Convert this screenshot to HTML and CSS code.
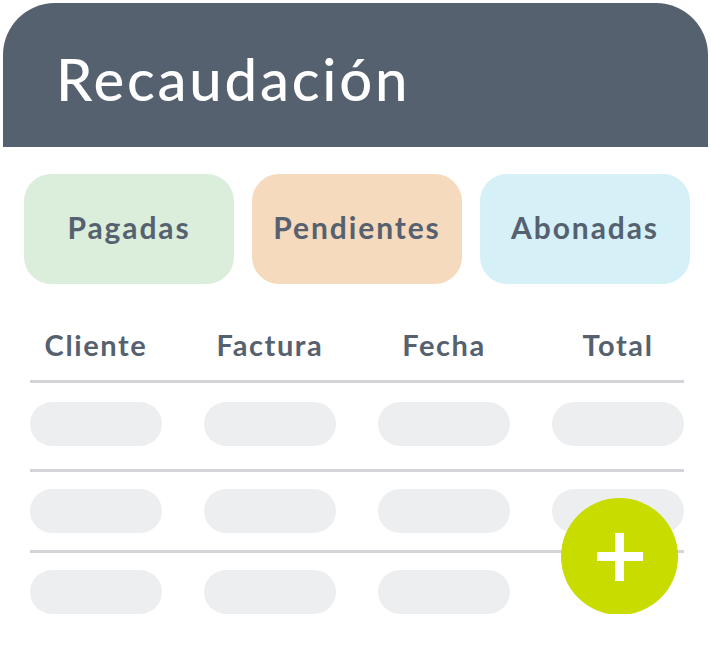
FILE: index.html
```html
<!DOCTYPE html>
<html lang="es">
<head>
<meta charset="utf-8">
<title>Recaudación</title>
<link rel="stylesheet" href="styles.css">
</head>
<body>
<div class="card">
  <header class="header">
    <h1 class="title">Recaudación</h1>
  </header>
  <nav class="tabs">
    <div class="tab tab-green">Pagadas</div>
    <div class="tab tab-orange">Pendientes</div>
    <div class="tab tab-blue">Abonadas</div>
  </nav>
  <section class="table">
    <div class="cols head">
      <div class="th">Cliente</div>
      <div class="th">Factura</div>
      <div class="th">Fecha</div>
      <div class="th">Total</div>
    </div>
    <div class="rule"></div>
    <div class="cols row row-1">
      <div class="pill"></div><div class="pill"></div><div class="pill"></div><div class="pill"></div>
    </div>
    <div class="rule"></div>
    <div class="cols row row-2">
      <div class="pill"></div><div class="pill"></div><div class="pill"></div><div class="pill"></div>
    </div>
    <div class="rule"></div>
    <div class="cols row row-3">
      <div class="pill"></div><div class="pill"></div><div class="pill"></div>
    </div>
    <button class="fab" aria-label="Añadir">
      <svg width="46" height="48" viewBox="0 0 46 48"><rect x="18" y="0" width="9" height="48" fill="#fff"/><rect x="0" y="19" width="46" height="9" fill="#fff"/></svg>
    </button>
  </section>
</div>
</body>
</html>
```
FILE: styles.css
```css
* { box-sizing: border-box; }
html, body { margin: 0; padding: 0; background: #fff; }
body { font-family: "Lato", "Open Sans", sans-serif; color: #566170; }
.card { width: 705px; margin: 3px 0 0 3px; }
.header {
  height: 144px;
  background: #566170;
  border-radius: 52px 52px 0 0;
  padding: 6px 0 0 53px;
  display: flex;
  align-items: center;
}
.title {
  margin: 0;
  color: #fff;
  font-weight: 500;
  font-size: 58px;
  letter-spacing: 2.8px;
}
.tabs {
  display: grid;
  grid-template-columns: repeat(3, 210px);
  gap: 18px;
  padding-left: 21px;
  margin-top: 27px;
}
.tab {
  height: 110px;
  border-radius: 27px;
  display: flex;
  align-items: center;
  justify-content: center;
  padding-bottom: 4px;
  font-weight: 700;
  font-size: 30px;
  letter-spacing: 1.9px;
  color: #566170;
}
.tab-green { background: #dbeedb; }
.tab-orange { background: #f5dabd; }
.tab-blue { background: #d6f0f8; }
.table { position: relative; margin-left: 27px; width: 654px; margin-top: 30px; }
.cols {
  display: grid;
  grid-template-columns: repeat(4, 132px);
  column-gap: 42px;
}
.head { height: 66px; align-items: center; padding-bottom: 6px; }
.th { text-align: center; font-weight: 700; font-size: 29px; letter-spacing: 1.6px; color: #566170; }
.rule { height: 3px; background: #d3d5d8; }
.pill { height: 44px; border-radius: 22px; background: #edeef0; }
.row-1 { padding: 19px 0 23px; }
.row-2 { padding: 17px 0 17px; }
.row-3 { padding: 17px 0 0; }
.fab {
  position: absolute;
  left: 531px;
  top: 184px;
  width: 117px;
  height: 117px;
  border-radius: 50%;
  background: #c8dc00;
  border: none;
  padding: 0;
  display: flex;
  align-items: center;
  justify-content: center;
}
.fab svg { display: block; }
```
